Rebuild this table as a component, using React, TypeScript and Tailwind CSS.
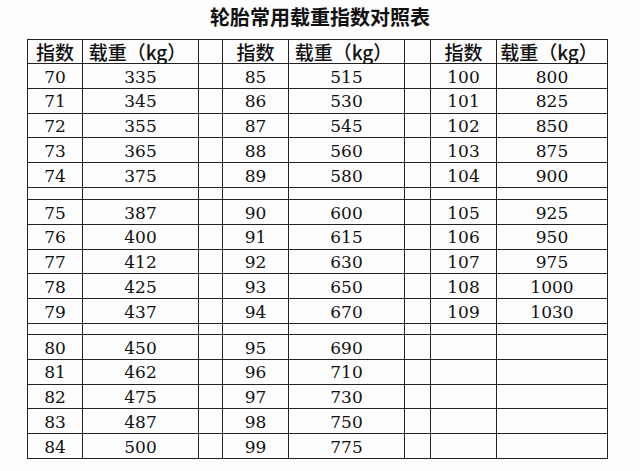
const groups = [
  {
    start: 70,
    loads: [335, 345, 355, 365, 375, 387, 400, 412, 425, 437, 450, 462, 475, 487, 500],
  },
  {
    start: 85,
    loads: [515, 530, 545, 560, 580, 600, 615, 630, 650, 670, 690, 710, 730, 750, 775],
  },
  {
    start: 100,
    loads: [800, 825, 850, 875, 900, 925, 950, 975, 1000, 1030],
  },
];

const cjk = "font-['Noto_Sans_CJK_SC',sans-serif]";
const num = "font-['DejaVu_Serif',serif]";

const Cell = ({ children, className = "" }: { children?: React.ReactNode; className?: string }) => (
  <div className={`bg-[#fdfdfd] flex items-center justify-center ${className}`}>{children}</div>
);

const HeaderRow = () => (
  <>
    {[0, 1, 2].map((g) => (
      <React.Fragment key={g}>
        <Cell className={`h-[23px] ${cjk} text-[19px] font-medium text-[#111] pt-[2px]`}>指数</Cell>
        <Cell className={`h-[23px] ${cjk} text-[19px] font-medium text-[#111] pt-[2px] pr-[6px]`}>载重（kg）</Cell>
        {g < 2 && <Cell className="h-[23px]" />}
      </React.Fragment>
    ))}
  </>
);

const DataRow = ({ i }: { i: number }) => (
  <>
    {groups.map((g, gi) => {
      const load = g.loads[i];
      return (
        <React.Fragment key={gi}>
          <Cell className={`h-[23.8px] ${num} text-[17px] text-[#111] pt-[3px]`}>{load !== undefined ? g.start + i : ""}</Cell>
          <Cell className={`h-[23.8px] ${num} text-[17px] text-[#111] pt-[3px]`}>{load !== undefined ? load : ""}</Cell>
          {gi < 2 && <Cell className="h-[23.8px]" />}
        </React.Fragment>
      );
    })}
  </>
);

const SpacerRow = ({ h }: { h: string }) => (
  <>
    {Array.from({ length: 8 }).map((_, k) => (
      <Cell key={k} className={h} />
    ))}
  </>
);

export default function App() {
  return (
    <div className="w-[640px] h-[471px] bg-[#fdfdfd] overflow-hidden">
      <h1 className={`${cjk} font-bold text-[20px] leading-[20px] text-[#111] text-center pt-[7px] h-[39px] pl-[-2px]`}>
        轮胎常用载重指数对照表
      </h1>
      <div className="ml-[27px] w-fit grid grid-cols-[54px_115px_23px_65px_115px_25px_65px_110px] gap-px bg-[#222] border border-[#222]">
        <HeaderRow />
        {[0, 1, 2, 3, 4].map((i) => (
          <DataRow key={i} i={i} />
        ))}
        <SpacerRow h="h-[11px]" />
        {[5, 6, 7, 8, 9].map((i) => (
          <DataRow key={i} i={i} />
        ))}
        <SpacerRow h="h-[10px]" />
        {[10, 11, 12, 13, 14].map((i) => (
          <DataRow key={i} i={i} />
        ))}
      </div>
    </div>
  );
}

import React from "react";
